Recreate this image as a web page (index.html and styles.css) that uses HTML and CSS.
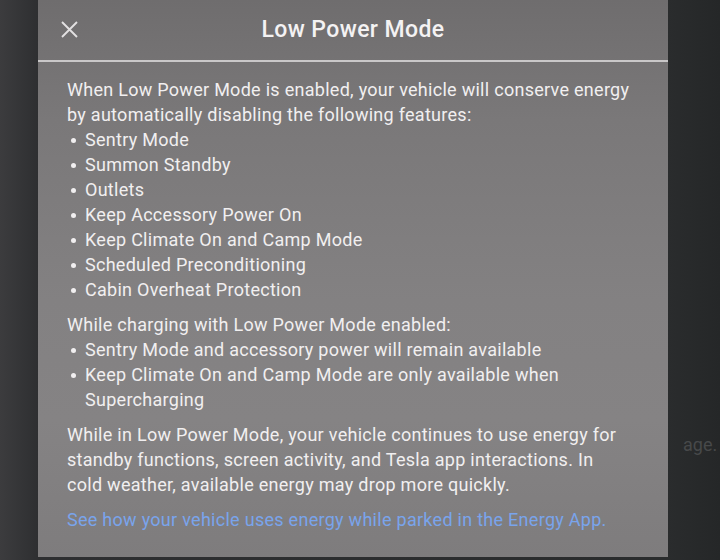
FILE: index.html
```html
<!DOCTYPE html>
<html>
<head>
<meta charset="utf-8">
<link rel="stylesheet" href="styles.css">
</head>
<body>
<div class="screen">
  <div class="modal">
    <div class="header">
      <svg class="close" width="17" height="17" viewBox="0 0 17 17"><path d="M1 1 L16 16 M16 1 L1 16" stroke="#e2e0e1" stroke-width="1.9" fill="none"/></svg>
      <div class="title">Low Power Mode</div>
    </div>
    <div class="content">
      <div class="block">
        <p class="line">When Low Power Mode is enabled, your vehicle will conserve energy by automatically disabling the following features:</p>
        <ul class="list">
          <li>Sentry Mode</li>
          <li>Summon Standby</li>
          <li>Outlets</li>
          <li>Keep Accessory Power On</li>
          <li>Keep Climate On and Camp Mode</li>
          <li>Scheduled Preconditioning</li>
          <li>Cabin Overheat Protection</li>
        </ul>
      </div>
      <div class="block">
        <p class="line">While charging with Low Power Mode enabled:</p>
        <ul class="list">
          <li>Sentry Mode and accessory power will remain available</li>
          <li>Keep Climate On and Camp Mode are only available when Supercharging</li>
        </ul>
      </div>
      <div class="block">
        <p class="line">While in Low Power Mode, your vehicle continues to use energy for standby functions, screen activity, and Tesla app interactions. In cold weather, available energy may drop more quickly.</p>
      </div>
      <div class="block">
        <p class="link">See how your vehicle uses energy while parked in the Energy App.</p>
      </div>
    </div>
  </div>
  <div class="behind">age.</div>
</div>
</body>
</html>
```
FILE: styles.css
```css
html, body {
  margin: 0;
  padding: 0;
}
body {
  width: 720px;
  height: 560px;
  overflow: hidden;
  background: linear-gradient(90deg, #3c3c3e 0px, #2e2f31 38px, #2a2c2d 668px, #252728 720px);
  font-family: Roboto, "Liberation Sans", sans-serif;
}
.screen {
  position: relative;
  display: flex;
  height: 560px;
}
.modal {
  margin-left: 38px;
  width: 630px;
  height: 557px;
  background: linear-gradient(180deg, #6f6d6e 0px, #7a7879 120px, #838182 300px, #858384 420px, #7e7c7d 557px);
  box-sizing: border-box;
}
.header {
  position: relative;
  height: 60px;
  border-bottom: 2px solid #c9c7c8;
  display: flex;
  align-items: center;
  justify-content: center;
}
.close {
  position: absolute;
  left: 23px;
  top: 21px;
}
.title {
  color: #f4f2f3;
  font-size: 23px;
  font-weight: 500;
  letter-spacing: 0.4px;
  margin-top: -2px;
}
.content {
  padding: 15px 37px 0 29px;
  color: #f1eff0;
  font-size: 18px;
  letter-spacing: 0.28px;
  line-height: 25px;
  display: flex;
  flex-direction: column;
  gap: 10px;
}
.line, .link {
  margin: 0;
}
.link {
  color: #79a4ec;
}
.list {
  margin: 0;
  padding: 0;
  list-style: none;
}
.list li {
  position: relative;
  padding-left: 18px;
}
.list li::before {
  content: "";
  position: absolute;
  left: 4px;
  top: 11px;
  width: 5px;
  height: 5px;
  border-radius: 50%;
  background: #f1eff0;
}
.behind {
  position: absolute;
  left: 683px;
  top: 434px;
  color: #47494a;
  font-size: 18px;
}
```
